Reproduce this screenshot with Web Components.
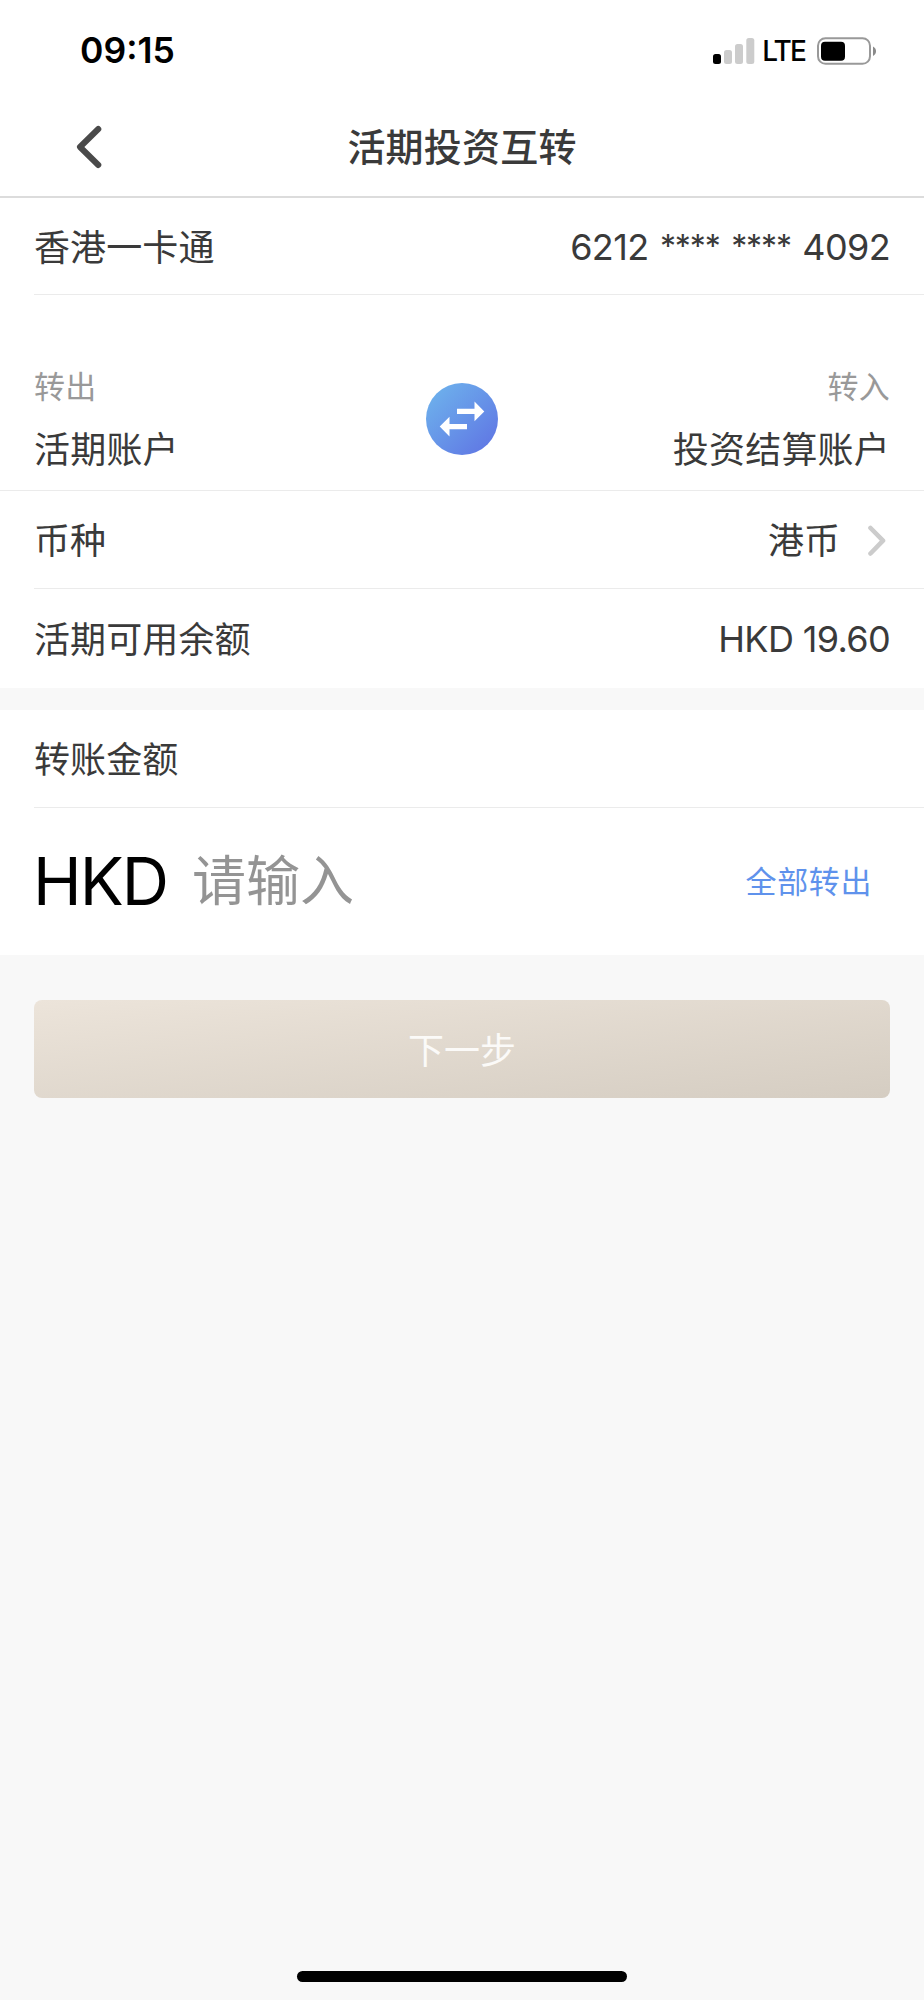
<!DOCTYPE html>
<html lang="zh-CN">
<head>
<meta charset="utf-8">
<title>活期投资互转</title>
<style>
    body {
        margin: 0;
        background: #f8f8f8;
        color: #3a3a3a;
        font-family: Inter, "Noto Sans CJK SC", sans-serif;
        font-size: 36px;
    }

    .num {
        letter-spacing: -0.65px;
        margin-top: -1px;
    }

    .card {
        word-spacing: 2px;
    }

    /* Chiffres masqués du numéro de carte */
    .mask {
        font-size: 32px;
        letter-spacing: -1.1px;
        line-height: 1;
        vertical-align: 2px;
    }
</style>
</head>
<body>
<transfer-page>
    <status-bar slot="header" time="09:15" network="LTE"></status-bar>
    <nav-bar slot="header">活期投资互转</nav-bar>

    <list-row style="height: 97px">香港一卡通<span slot="value" class="num card">6212 <span class="mask">****</span> <span class="mask">****</span> 4092</span></list-row>
    <transfer-accounts>
        <span slot="from-label">转出</span>
        <span slot="from">活期账户</span>
        <span slot="to-label">转入</span>
        <span slot="to">投资结算账户</span>
    </transfer-accounts>
    <list-row arrow>币种<span slot="value">港币</span></list-row>
    <list-row last style="height: 99px">活期可用余额<span slot="value" class="num">HKD 19.60</span></list-row>

    <list-row style="margin-top: 22px">转账金额</list-row>
    <amount-field currency="HKD" placeholder="请输入">全部转出</amount-field>
    <submit-button slot="footer">下一步</submit-button>
</transfer-page>

<script>
class TransferPage extends HTMLElement {
    constructor() {
        super();
        this.attachShadow({ mode: "open" });
        this.shadowRoot.innerHTML = `
        <style>
            :host {
                display: flex;
                flex-direction: column;
                height: 2000px;
                box-sizing: border-box;
                padding-bottom: 18px;
                background: #f8f8f8;
            }
            .home {
                width: 330px;
                height: 11px;
                border-radius: 6px;
                background: #000;
                margin: auto auto 0;
            }
        </style>
        <slot name="header"></slot>
        <slot></slot>
        <slot name="footer"></slot>
        <div class="home"></div>
      `;
    }
}
customElements.define("transfer-page", TransferPage);

class StatusBar extends HTMLElement {
    constructor() {
        super();
        this.attachShadow({ mode: "open" });
        this.shadowRoot.innerHTML = `
        <style>
            :host {
                display: flex;
                justify-content: space-between;
                align-items: center;
                height: 101px;
                box-sizing: border-box;
                padding: 0 47px 0 80px;
                background: #fff;
                color: #000;
            }
            .time {
                font-size: 35.5px;
                font-weight: 600;
            }
            .right {
                display: flex;
                align-items: center;
            }
            .network {
                font-size: 28px;
                font-weight: 500;
                letter-spacing: -1.9px;
                margin: 1px 12px 0 7px;
            }
            svg {
                display: block;
            }
        </style>
        <span class="time"></span>
        <div class="right">
            <svg width="42" height="28" viewBox="0 0 42 28">
                <rect x="0" y="17" width="8" height="10" rx="2.5" fill="#000"/>
                <rect x="11" y="13" width="8" height="14" rx="2.5" fill="#ccc"/>
                <rect x="22" y="7" width="8" height="20" rx="2.5" fill="#ccc"/>
                <rect x="33.3" y="1" width="8" height="26" rx="2.5" fill="#ccc"/>
            </svg>
            <span class="network"></span>
            <svg width="60" height="28" viewBox="0 0 60 28">
                <rect x="1" y="1.2" width="52" height="25.6" rx="7.5" fill="none" stroke="#999" stroke-width="2"/>
                <rect x="4" y="4.7" width="24" height="19" rx="4" fill="#000"/>
                <path d="M56 9.5 C60 11.5 60 17 56 19 Z" fill="#8a8a8a"/>
            </svg>
        </div>
      `;
        this.shadowRoot.querySelector(".time").textContent = this.getAttribute("time");
        this.shadowRoot.querySelector(".network").textContent = this.getAttribute("network");
    }
}
customElements.define("status-bar", StatusBar);

class NavBar extends HTMLElement {
    constructor() {
        super();
        this.attachShadow({ mode: "open" });
        this.shadowRoot.innerHTML = `
        <style>
            :host {
                display: grid;
                grid-template-columns: 120px 1fr 120px;
                align-items: center;
                height: 97px;
                box-sizing: border-box;
                padding-bottom: 4px;
                border-bottom: 2px solid #dcdcdc;
                background: #fff;
            }
            .title {
                text-align: center;
                font-size: 38px;
                font-weight: 500;
                letter-spacing: 0.2px;
                line-height: 44px;
                color: #3a3a3a;
            }
            svg {
                display: block;
                margin-left: 74px;
            }
        </style>
        <svg width="30" height="46" viewBox="0 0 30 46" fill="none" stroke="#4a4a4a" stroke-width="6" stroke-linecap="round" stroke-linejoin="round">
            <path d="M24.3 5 L6 23 L24.3 41"/>
        </svg>
        <div class="title"><slot></slot></div>
      `;
    }
}
customElements.define("nav-bar", NavBar);

class ListRow extends HTMLElement {
    constructor() {
        super();
        this.attachShadow({ mode: "open" });
        this.shadowRoot.innerHTML = `
        <style>
            :host {
                display: block;
                height: 98px;
                box-sizing: border-box;
                padding-left: 34px;
                background: #fff;
            }
            .inner {
                display: flex;
                justify-content: space-between;
                align-items: center;
                height: 100%;
                box-sizing: border-box;
                padding: 2px 34px 0 0;
                border-bottom: 1.5px solid #ebebeb;
                line-height: 44px;
            }
            :host([last]) .inner {
                border-bottom: none;
            }
            .label {
                padding-top: 1px;
                letter-spacing: 0.1px;
            }
            .value {
                display: flex;
                align-items: center;
            }
            svg {
                display: none;
                margin: 0 3px 0 27px;
            }
            :host([arrow]) svg {
                display: block;
            }
        </style>
        <div class="inner">
            <div class="label"><slot></slot></div>
            <div class="value">
                <slot name="value"></slot>
                <svg width="20" height="32" viewBox="0 0 20 32" fill="none" stroke="#ccc" stroke-width="4.6" stroke-linecap="round" stroke-linejoin="round">
                    <path d="M3.5 3 L16 15.7 L3.5 28.5"/>
                </svg>
            </div>
        </div>
      `;
    }
}
customElements.define("list-row", ListRow);

class TransferAccounts extends HTMLElement {
    constructor() {
        super();
        this.attachShadow({ mode: "open" });
        this.shadowRoot.innerHTML = `
        <style>
            :host {
                display: grid;
                grid-template-columns: 1fr 72px 1fr;
                height: 196px;
                box-sizing: border-box;
                padding: 70px 34px 0;
                border-bottom: 1.5px solid #ebebeb;
                background: #fff;
            }
            .side {
                display: flex;
                flex-direction: column;
                gap: 19px;
                line-height: 44px;
                letter-spacing: 0.2px;
            }
            .to {
                text-align: right;
            }
            .label {
                font-size: 31px;
                color: #999;
            }
            svg {
                display: block;
                margin-top: 18px;
            }
        </style>
        <div class="side">
            <div class="label"><slot name="from-label"></slot></div>
            <div><slot name="from"></slot></div>
        </div>
        <svg width="72" height="72" viewBox="0 0 72 72">
            <defs>
                <linearGradient id="blue" x1="0.1" y1="0.1" x2="0.9" y2="0.9">
                    <stop offset="0" stop-color="#6db0ec"/>
                    <stop offset="1" stop-color="#6078e4"/>
                </linearGradient>
            </defs>
            <circle cx="36" cy="36" r="36" fill="url(#blue)"/>
            <path d="M31 25.8 H48.5 V18.5 L58.3 28.4 L48.5 38.3 V31 H31 Z" fill="#fff"/>
            <path d="M41 41 H23.5 V33.7 L13.7 43.5 L23.5 53.4 V46.2 H41 Z" fill="#fff"/>
        </svg>
        <div class="side to">
            <div class="label"><slot name="to-label"></slot></div>
            <div><slot name="to"></slot></div>
        </div>
      `;
    }
}
customElements.define("transfer-accounts", TransferAccounts);

class AmountField extends HTMLElement {
    constructor() {
        super();
        this.attachShadow({ mode: "open" });
        this.shadowRoot.innerHTML = `
        <style>
            :host {
                display: flex;
                align-items: center;
                height: 147px;
                box-sizing: border-box;
                padding: 0 52px 0 33px;
                background: #fff;
            }
            .currency {
                font-size: 65.5px;
                letter-spacing: -2px;
                line-height: 80px;
                padding-top: 1px;
                color: #000;
            }
            .placeholder {
                margin-left: 25px;
                font-size: 54px;
                line-height: 80px;
                color: #949494;
            }
            .all {
                margin-left: auto;
                padding-top: 1px;
                font-size: 31px;
                letter-spacing: 0.6px;
                line-height: 44px;
                color: #5f92ec;
            }
        </style>
        <span class="currency"></span>
        <span class="placeholder"></span>
        <span class="all"><slot></slot></span>
      `;
        this.shadowRoot.querySelector(".currency").textContent = this.getAttribute("currency");
        this.shadowRoot.querySelector(".placeholder").textContent = this.getAttribute("placeholder");
    }
}
customElements.define("amount-field", AmountField);

class SubmitButton extends HTMLElement {
    constructor() {
        super();
        this.attachShadow({ mode: "open" });
        this.shadowRoot.innerHTML = `
        <style>
            :host {
                display: block;
                margin: 45px 34px 0;
            }
            button {
                display: block;
                width: 100%;
                height: 98px;
                padding: 0 0 2px;
                border: none;
                border-radius: 8px;
                background: linear-gradient(to bottom right, #ece4da, #d5cdc2);
                color: #fbfaf8;
                font: inherit;
            }
        </style>
        <button><slot></slot></button>
      `;
    }
}
customElements.define("submit-button", SubmitButton);
</script>
</body>
</html>
